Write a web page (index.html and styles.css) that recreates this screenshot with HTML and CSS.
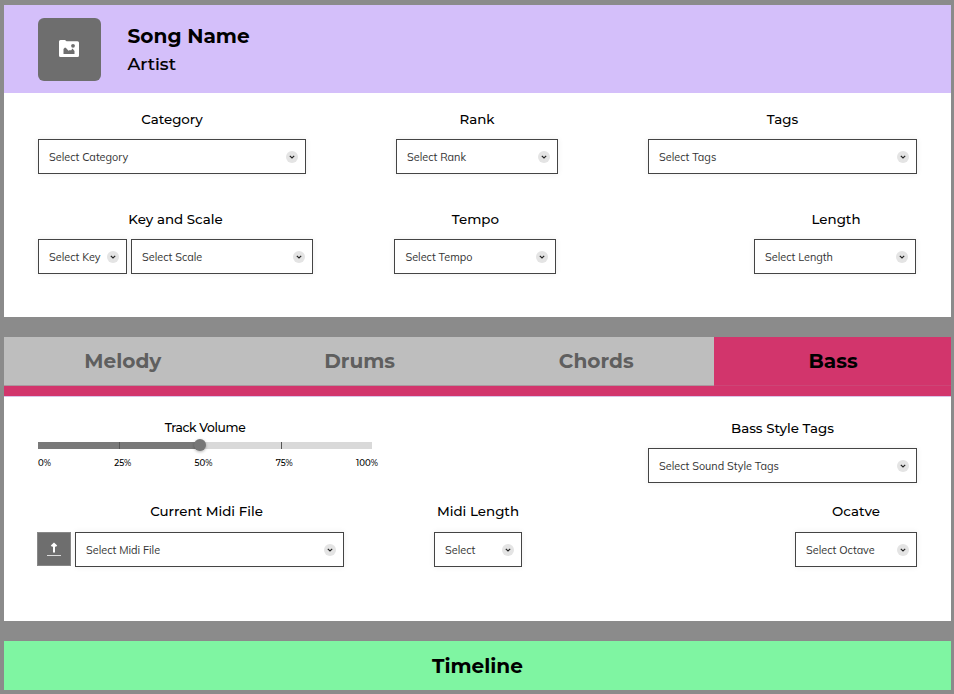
FILE: index.html
```
<!DOCTYPE html>
<html lang="en">
<head>
<meta charset="utf-8">
<title>Song editor</title>
<link rel="stylesheet" href="styles.css">
</head>
<body>
<svg class="defs" aria-hidden="true">
  <symbol id="chev" viewBox="0 0 12 12"><circle cx="6" cy="6" r="6" fill="#e4e4e4"/><path d="M3.800 4.800l2.200 2.200 2.200-2.200" fill="none" stroke="#222" stroke-width="1.150"/></symbol>
</svg>
<main class="page">
  <section class="panel song">
    <header class="song-head">
      <div class="cover"><svg width="20" height="17" viewBox="0 0 20 17"><path d="M1.500 0H6l1.500 1.300h11Q20 1.300 20 2.800v12.700q0 1.500-1.500 1.500h-17Q0 17 0 15.500v-14Q0 0 1.500 0z" fill="#fff"/><path d="M4.500 14V9l1.500-1.500 1 .5 2.500 2.800 1.500-.800 1 .5L13.500 8.500l2 2.500v3z" fill="#6e6e6e"/><circle cx="14" cy="5.800" r="1.900" fill="#6e6e6e"/></svg></div>
      <div class="names"><h1><span>Song Name</span></h1><h2><span>Artist</span></h2></div>
    </header>
    <div class="row row-1">
      <div class="field w268"><label><span>Category</span></label><div class="select"><span>Select Category</span><svg><use href="#chev"/></svg></div></div>
      <div class="field w162"><label><span>Rank</span></label><div class="select"><span>Select Rank</span><svg><use href="#chev"/></svg></div></div>
      <div class="field w269"><label><span>Tags</span></label><div class="select"><span>Select Tags</span><svg><use href="#chev"/></svg></div></div>
    </div>
    <div class="row row-2">
      <div class="field w275"><label><span>Key and Scale</span></label><div class="pair"><div class="select key"><span>Select Key</span><svg><use href="#chev"/></svg></div><div class="select grow"><span>Select Scale</span><svg><use href="#chev"/></svg></div></div></div>
      <div class="field w162 tempo"><label><span>Tempo</span></label><div class="select"><span>Select Tempo</span><svg><use href="#chev"/></svg></div></div>
      <div class="field w162 end"><label class="length-label"><span>Length</span></label><div class="select"><span>Select Length</span><svg><use href="#chev"/></svg></div></div>
    </div>
  </section>

  <section class="panel track">
    <nav class="tabs"><div class="tab"><span>Melody</span></div><div class="tab"><span>Drums</span></div><div class="tab"><span>Chords</span></div><div class="tab active"><span>Bass</span></div></nav>
    <div class="row row-3">
      <div class="volume">
        <label><span>Track Volume</span></label>
        <div class="slider"><div class="fill"></div><i class="tick q1"></i><i class="tick q3"></i><b class="knob"></b></div>
        <div class="scale"><span>0%</span><span>25%</span><span>50%</span><span>75%</span><span>100%</span></div>
      </div>
      <div class="field w269 end"><label><span>Bass Style Tags</span></label><div class="select"><span>Select Sound Style Tags</span><svg><use href="#chev"/></svg></div></div>
    </div>
    <div class="row row-4">
      <div class="field midi"><label><span>Current Midi File</span></label><div class="pair"><div class="upload"><svg width="14" height="15" viewBox="0 0 14 15"><path d="M7 10.500V2M4.500 4.300L7 1.900l2.500 2.400" fill="none" stroke="#fff" stroke-width="2"/><path d="M0 13.500h14" stroke="#ddd" stroke-width="1"/></svg></div><div class="select w269"><span>Select Midi File</span><svg><use href="#chev"/></svg></div></div></div>
      <div class="field w88"><label><span>Midi Length</span></label><div class="select"><span>Select</span><svg><use href="#chev"/></svg></div></div>
      <div class="field w122 end"><label><span>Ocatve</span></label><div class="select"><span>Select Octave</span><svg><use href="#chev"/></svg></div></div>
    </div>
  </section>

  <section class="timeline"><span>Timeline</span></section>
</main>
</body>
</html>
```
FILE: styles.css
```
* { box-sizing: border-box; }
body { margin: 0; background: #8b8b8b; color: #000; font-family: Montserrat, Inter, sans-serif; }
.defs { position: absolute; width: 0; height: 0; }
.page { display: flex; flex-direction: column; gap: 20px; width: 954px; height: 694px; padding: 5px 3px 4px 4px; overflow: hidden; }
.panel { background: #fff; }
.song { height: 312px; }
.song-head { display: flex; align-items: center; height: 88px; padding-left: 34px; gap: 26.500px; background: #d4bffa; }
.cover { display: flex; align-items: center; justify-content: center; width: 63px; height: 63px; padding: 0 1px 1px 0; border-radius: 6px; background: #6e6e6e; }
.names { padding-top: 1px; }
h1, h2 { margin: 0; line-height: 28px; white-space: nowrap; }
h1 { font-size: 20.100px; font-weight: 700; }
h2 { font-size: 17.500px; font-weight: 500; -webkit-text-stroke: .2px #000; }
.row { display: flex; padding: 0 34px 0 33px; }
.row-1 { justify-content: space-between; padding: 16px 34px 0; }
.row-2 { padding: 35px 35px 0 34px; }
.row-3 { padding-top: 22px; }
.row-4 { padding-top: 18px; }
.field { display: flex; flex-direction: column; }
label { display: block; height: 20px; margin-bottom: 10px; line-height: 20px; font-size: 13.400px; font-weight: 500; text-align: center; white-space: nowrap; }
.length-label { padding-left: 2px; }
.row-3 .field { margin-top: -1px; }
.row-4 label { margin-bottom: 11px; }
.w268 { width: 268px; }
.w269 { width: 269px; }
.w162 { width: 162px; }
.w275 { width: 275px; }
.w122 { width: 122px; }
.w88 { width: 88px; }
.tempo { margin-left: 81.400px; }
.end { margin-left: auto; }
.select { display: flex; align-items: center; justify-content: space-between; height: 35px; padding: 0 7px 0 10px; border: 1px solid #444; background: #fff; box-shadow: 0 0 6px rgba(0,0,0,.07); font-family: Mulish, "Open Sans", sans-serif; font-size: 10.850px; color: #333; white-space: nowrap; }
.select svg { flex: none; width: 12px; height: 12px; }
.pair { display: flex; gap: 4px; }
.key { width: 89px; }
.grow { flex: 1; }
.track { height: 284px; }
.tabs { display: grid; grid-template-columns: repeat(3, 236.700px) 1fr; height: 59px; margin-bottom: 1px; border-bottom: 10px solid #d2356c; background: #bebebe; box-shadow: 0 1px #d9c3e8; }
.tab { display: flex; align-items: center; justify-content: center; padding: 0 0 1px 1px; border-bottom: 1px solid #ab979e; font-size: 20.100px; font-weight: 700; color: #5f5f5f; }
.active { border-bottom-color: #cd4576; background: #d2356c; color: #000; }
.volume { width: 341px; padding-left: 1px; }
.volume label { width: 334px; height: 18px; margin-bottom: 5px; line-height: 18px; font-size: 12.300px; letter-spacing: -.35px; }
.slider { position: relative; width: 334px; height: 7px; background: #d9d9d9; }
.fill { width: 162px; height: 7px; background: #797979; }
.tick { position: absolute; top: 0; width: 1px; height: 7px; background: #555; }
.q1 { left: 81px; }
.q3 { left: 243px; }
.knob { position: absolute; left: 156px; top: -3px; width: 12px; height: 12px; border-radius: 50%; background: #777; box-shadow: 0 1px 3px rgba(0,0,0,.3); }
.scale { display: flex; justify-content: space-between; width: 340px; padding-top: 9px; font-size: 8.600px; line-height: 11px; font-weight: 500; }
.midi { width: 397px; }
.midi label { width: 339px; }
.upload { display: flex; align-items: center; justify-content: center; width: 34px; height: 34px; background: #6e6e6e; border: 1px solid #888; }
.timeline { display: flex; align-items: center; justify-content: center; height: 49px; background: #7ff5a2; font-size: 20.100px; font-weight: 700; }
```
